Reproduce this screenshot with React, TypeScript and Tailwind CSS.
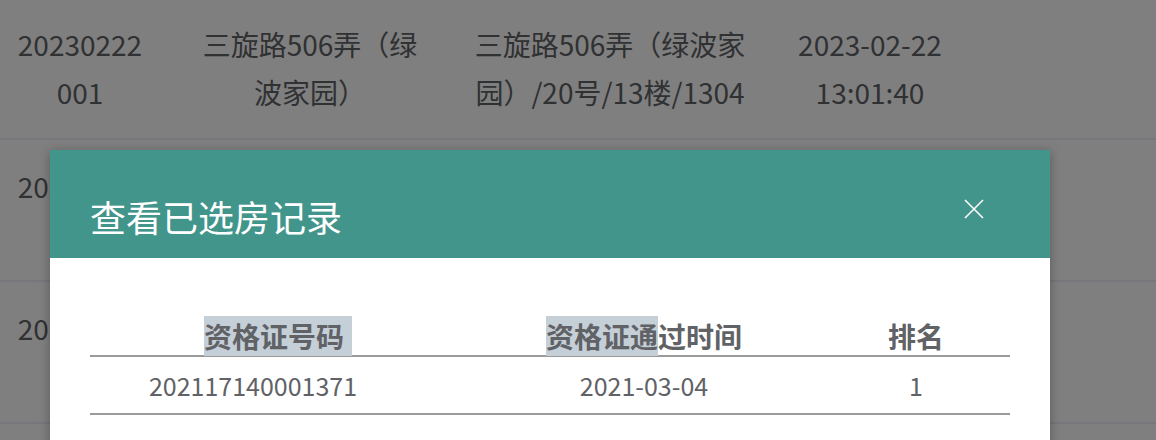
const rows = [
  {
    no: "20230222001",
    name: "三旋路506弄（绿波家园）",
    addr: "三旋路506弄（绿波家园）/20号/13楼/1304",
    time: "2023-02-22 13:01:40",
  },
  {
    no: "20230222002",
    name: "三旋路506弄（绿波家园）",
    addr: "三旋路506弄（绿波家园）/20号/13楼/1303",
    time: "2023-02-22 13:05:12",
  },
  {
    no: "20230222003",
    name: "三旋路506弄（绿波家园）",
    addr: "三旋路506弄（绿波家园）/20号/12楼/1204",
    time: "2023-02-22 13:09:27",
  },
];

const App = () => {
  return (
    <div
      className="relative h-[440px] w-full overflow-hidden bg-white"
      style={{ fontFamily: '"Noto Sans CJK SC", "Noto Sans", sans-serif' }}
    >
      {/* underlying list */}
      <div className="-mt-[2px] text-[28px] leading-[48px] text-[#606266]">
        {rows.map((r) => (
          <div key={r.no} className="flex border-b-2 border-[#ebeef5] py-[22px]">
            <div className="w-[160px] break-all px-[12px] text-center">{r.no}</div>
            <div className="w-[300px] px-[30px] text-center">{r.name}</div>
            <div className="w-[300px] px-[10px] text-center">{r.addr}</div>
            <div className="w-[220px] px-[20px] text-center">{r.time}</div>
          </div>
        ))}
      </div>

      {/* overlay */}
      <div className="absolute inset-0 bg-black/50" />

      {/* dialog */}
      <div className="absolute left-[50px] top-[150px] w-[1000px] bg-white shadow-[0_2px_10px_rgba(0,0,0,0.3)]">
        <div className="flex h-[108px] items-center justify-between bg-[#42958a] pl-[40px] pr-[66px] pt-[24px]">
          <h2 className="text-[36px] font-normal leading-[44px] text-white">查看已选房记录</h2>
          <button className="-mt-[15px] text-white">
            <svg width="20" height="20" viewBox="0 0 20 20" fill="none" stroke="currentColor" strokeWidth="1.6">
              <path d="M1 1L19 19M19 1L1 19" />
            </svg>
          </button>
        </div>
        <div className="px-[40px] pb-[40px] pt-[59px]">
          <table className="w-full table-fixed border-collapse text-[#606266]">
            <thead>
              <tr className="border-b-2 border-[#9b9b9b] text-[28px] font-bold">
                <th className="w-[376px] p-0 leading-[38px]">
                  <span className="bg-[#c5cfd8] pr-[8px]">资格证号码</span>
                </th>
                <th className="w-[356px] p-0 leading-[38px]">
                  <span className="bg-[#c5cfd8]">资格证通</span>过时间
                </th>
                <th className="p-0 leading-[38px]">排名</th>
              </tr>
            </thead>
            <tbody>
              <tr className="border-b-2 border-[#9b9b9b] text-center text-[25px]">
                <td className="p-0 pr-[50px] leading-[56px]">202117140001371</td>
                <td className="p-0 leading-[56px]">2021-03-04</td>
                <td className="p-0 leading-[56px]">1</td>
              </tr>
            </tbody>
          </table>
        </div>
      </div>
    </div>
  );
};

export default App;
